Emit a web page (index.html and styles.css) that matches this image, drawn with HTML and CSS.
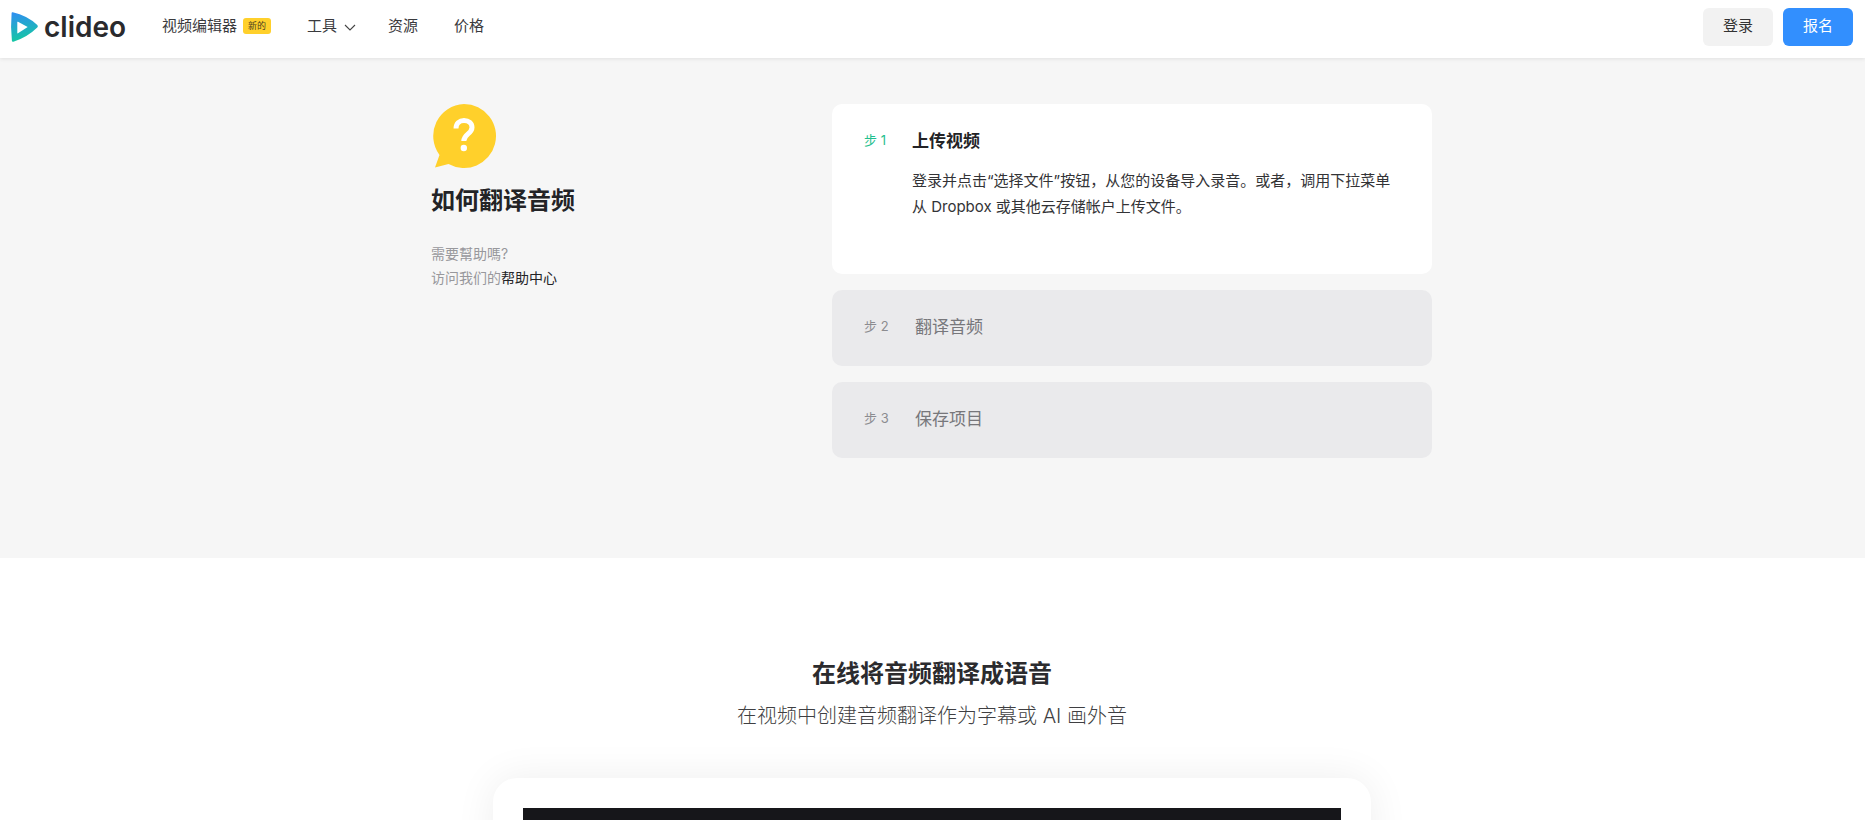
FILE: index.html
```html
<!DOCTYPE html>
<html lang="zh-CN">
<head>
<meta charset="utf-8">
<title>如何翻译音频</title>
<link rel="stylesheet" href="styles.css">
</head>
<body>
<header class="topbar">
  <a class="logo" href="#">
    <svg class="logo-mark" viewBox="0 0 30 32" width="30" height="32" aria-hidden="true">
      <defs>
        <linearGradient id="lg" x1="0.25" y1="0" x2="0.4" y2="1">
          <stop offset="0" stop-color="#2f8ff0"/>
          <stop offset="1" stop-color="#14c9a0"/>
        </linearGradient>
      </defs>
      <path fill="url(#lg)" d="M1.600 2.200 Q1.600 1 2.800 1.300 Q17 4.500 27.300 14 Q28.500 15.300 27.300 16.500 Q17 26.500 3.400 30.700 Q2 31 1.900 29.700 Q0.400 16 1.600 2.200 Z"/>
      <path fill="#fff" d="M7.300 11 Q7.300 10.400 8 10.800 L17.700 16 L8 22.300 Q7.300 22.700 7.300 22 Z"/>
    </svg>
    <span class="logo-text">clideo</span>
  </a>
  <nav class="nav">
    <a class="nav-item nav-editor" href="#">视频编辑器<span class="badge">新的</span></a>
    <a class="nav-item nav-tools" href="#">工具<svg class="chev" viewBox="0 0 12 7" width="12" height="7" aria-hidden="true"><path d="M1 1l5 5 5-5" fill="none" stroke="#444" stroke-width="1.100"/></svg></a>
    <a class="nav-item nav-res" href="#">资源</a>
    <a class="nav-item" href="#">价格</a>
  </nav>
  <div class="auth">
    <a class="btn btn-login" href="#">登录</a>
    <a class="btn btn-signup" href="#">报名</a>
  </div>
</header>

<section class="howto">
  <div class="howto-inner">
    <aside class="howto-side">
      <svg class="q-icon" viewBox="0 0 64 64" width="64" height="64" aria-hidden="true">
        <path fill="#ffd02b" d="M32 0a32 32 0 1 1-15.500 60L3 63.500 7.500 51A32 32 0 0 1 32 0z"/>
        <path fill="none" stroke="#fff" stroke-width="5" d="M24 24.500c0-5 3.600-8 8-8 4.800 0 8 2.900 8 7 0 6.300-8.200 6.500-8.200 13.500"/>
        <circle cx="31.800" cy="44" r="3.200" fill="#fff"/>
      </svg>
      <h1 class="side-title">如何翻译音频</h1>
      <p class="side-help">需要幫助嗎?<br>访问我们的<a href="#">帮助中心</a></p>
    </aside>
    <div class="steps">
      <article class="step step-open">
        <span class="step-num">步 1</span>
        <div class="step-body">
          <h3 class="step-title">上传视频</h3>
          <p class="step-text">登录并点击“选择文件”按钮，从您的设备导入录音。或者，调用下拉菜单从 Dropbox 或其他云存储帐户上传文件。</p>
        </div>
      </article>
      <article class="step">
        <span class="step-num">步 2</span>
        <span class="step-label">翻译音频</span>
      </article>
      <article class="step">
        <span class="step-num">步 3</span>
        <span class="step-label">保存项目</span>
      </article>
    </div>
  </div>
</section>

<section class="promo">
  <h2 class="promo-title">在线将音频翻译成语音</h2>
  <p class="promo-sub">在视频中创建音频翻译作为字幕或 AI 画外音</p>
  <div class="video-card">
    <div class="video"></div>
  </div>
</section>
</body>
</html>
```

FILE: styles.css
```css
* { box-sizing: border-box; }
html, body {
  margin: 0;
  height: 820px;
  overflow: hidden;
}
body {
  background: #fff;
  color: #2b2b2e;
  font-family: Inter, "Noto Sans CJK SC", sans-serif;
}
a { color: inherit; text-decoration: none; }
h1, h2, h3, p { margin: 0; }

.topbar {
  position: relative;
  z-index: 2;
  display: flex;
  align-items: flex-start;
  height: 58px;
  padding: 0 12px 0 10px;
  background: #fff;
  box-shadow: 0 1px 4px rgba(0, 0, 0, 0.09);
}
.logo {
  display: flex;
  align-items: center;
  gap: 4px;
  width: 152px;
  padding-top: 11px;
}
.logo-mark { display: block; }
.logo-text {
  font-family: Inter, sans-serif;
  font-size: 28px;
  font-weight: 600;
  line-height: 1;
  color: #2a2a2d;
}
.nav {
  display: flex;
  align-items: center;
  height: 48px;
  font-size: 15px;
  color: #3a3a3d;
}
.nav-item { display: flex; align-items: center; }
.nav-editor { margin-right: 36px; }
.nav-tools { margin-right: 32px; }
.nav-res { margin-right: 36px; }
.badge {
  margin: 4px 0 0 6px;
  width: 28px;
  height: 16px;
  border-radius: 3px;
  background: #ffd02b;
  font-size: 9px;
  line-height: 16px;
  text-align: center;
  color: #4a4220;
}
.chev { margin-left: 7px; margin-top: 6px; }
.auth { display: flex; gap: 10px; margin-left: auto; padding-top: 8px; }
.btn {
  width: 70px;
  height: 38px;
  border-radius: 6px;
  font-size: 15px;
  line-height: 36px;
  text-align: center;
}
.btn-login { background: #f2f2f2; color: #333; }
.btn-signup { background: #328ffe; color: #fff; }

.howto {
  height: 500px;
  padding: 46px 1px 0 0;
  background: #f6f6f6;
}
.howto-inner {
  display: flex;
  width: 1000px;
  margin: 0 auto;
}
.howto-side { width: 400px; }
.q-icon { display: block; }
.side-title {
  margin: 15px 0 0 -1px;
  font-size: 24px;
  font-weight: 700;
  line-height: 36px;
  color: #232326;
}
.side-help {
  margin: 23px 0 0 -1px;
  font-size: 14px;
  line-height: 24px;
  color: #98989c;
}
.side-help a { color: #232326; }

.steps {
  display: flex;
  flex-direction: column;
  gap: 16px;
  width: 600px;
}
.step {
  display: flex;
  align-items: center;
  height: 76px;
  padding: 0 32px 6px;
  border-radius: 10px;
  background: #eaeaec;
}
.step-num {
  width: 51px;
  flex: none;
  font-size: 13px;
  color: #8c8c90;
}
.step-label {
  font-size: 17px;
  color: #77777b;
}
.step-open {
  align-items: flex-start;
  height: 170px;
  padding-top: 24px;
  background: #fff;
}
.step-open .step-num {
  width: 48px;
  line-height: 25px;
  color: #1fc08e;
}
.step-body { width: 490px; }
.step-title {
  font-size: 17px;
  font-weight: 700;
  line-height: 26px;
  color: #232326;
}
.step-text {
  margin-top: 14px;
  font-size: 15px;
  line-height: 26px;
  color: #333336;
}

.promo {
  display: flex;
  flex-direction: column;
  align-items: center;
  padding: 98px 1px 0 0;
}
.promo-title {
  font-size: 24px;
  font-weight: 700;
  line-height: 36px;
  color: #2b2b2e;
}
.promo-sub {
  margin-top: 8px;
  font-size: 20px;
  font-weight: 300;
  line-height: 32px;
  color: #3f3f42;
}
.video-card {
  width: 878px;
  height: 460px;
  margin-top: 46px;
  padding: 30px;
  border-radius: 24px;
  background: #fff;
  box-shadow: 0 0 40px rgba(0, 0, 0, 0.07);
}
.video {
  height: 400px;
  background: #16161a;
}
```
